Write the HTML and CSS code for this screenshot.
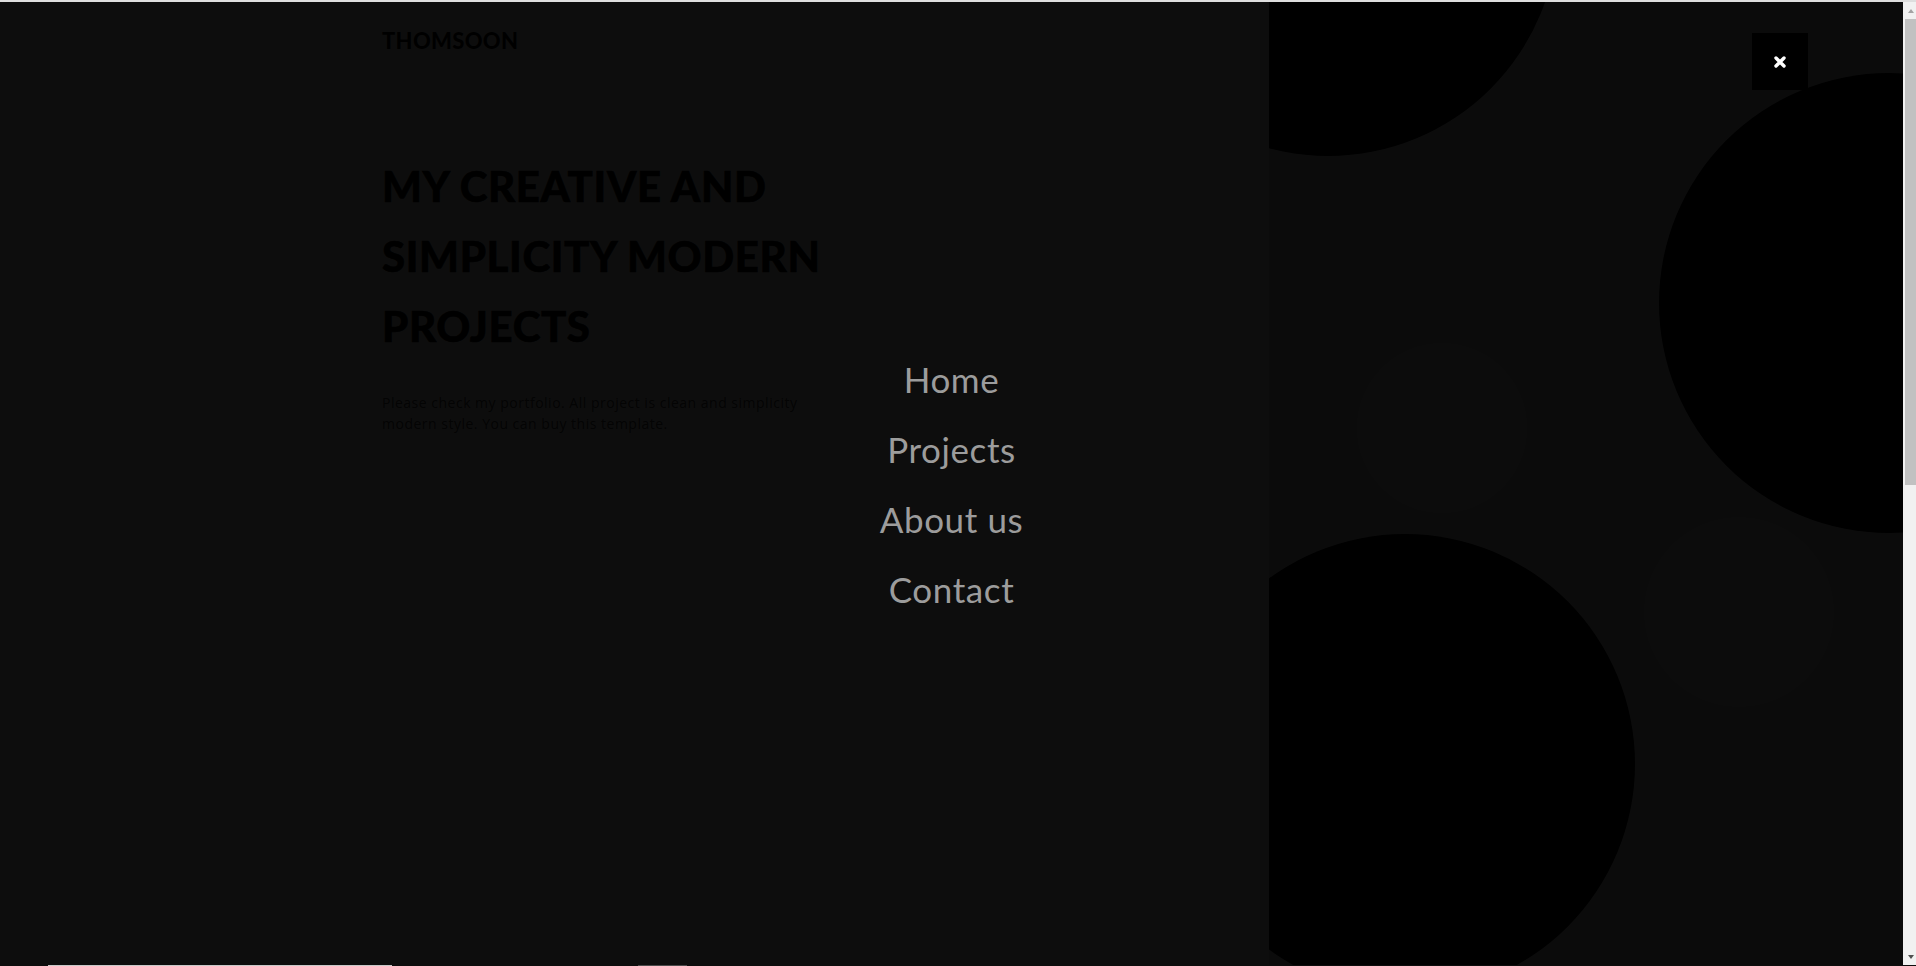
FILE: index.html
```html
<!DOCTYPE html>
<html lang="en">
<head>
<meta charset="utf-8">
<title>Thomsoon</title>
<link rel="stylesheet" href="styles.css">
</head>
<body>
<div class="topline"></div>
<div class="frame">
  <div class="page">
    <div class="main">
      <header class="site-header">
        <a class="logo" href="#">THOMSOON</a>
      </header>
      <section class="hero">
        <h1 class="hero-title">MY CREATIVE AND<br>SIMPLICITY MODERN<br>PROJECTS</h1>
        <p class="hero-text">Please check my portfolio. All project is clean and simplicity<br>modern style. You can buy this template.</p>
      </section>
    </div>
    <div class="panel">
      <svg class="panel-art" viewBox="0 0 634 963" preserveAspectRatio="none" aria-hidden="true">
        <rect x="0" y="0" width="634" height="963" fill="#d8d8d8"/>
        <circle cx="173" cy="426" r="85" fill="#e4e4e4"/>
        <circle cx="470" cy="610" r="95" fill="#dedede"/>
        <circle cx="59" cy="-76" r="230" fill="#000"/>
        <circle cx="620" cy="301" r="230" fill="#000"/>
        <circle cx="136" cy="762" r="230" fill="#000"/>
      </svg>
    </div>
    <div class="menu-overlay">
      <button class="close-btn" type="button" aria-label="Close menu">
        <svg viewBox="0 0 12 12" width="12" height="12" aria-hidden="true">
          <path d="M2 2 L10 10 M10 2 L2 10" stroke="#fff" stroke-width="3.4" stroke-linecap="round" fill="none"/>
        </svg>
      </button>
      <nav class="menu-nav">
        <ul class="menu-list">
          <li><a href="#">Home</a></li>
          <li><a href="#">Projects</a></li>
          <li><a href="#">About us</a></li>
          <li><a href="#">Contact</a></li>
        </ul>
      </nav>
    </div>
  </div>
  <div class="scrollbar">
    <div class="sb-arrow sb-up"></div>
    <div class="sb-thumb"></div>
    <div class="sb-track"></div>
    <div class="sb-arrow sb-down"></div>
  </div>
</div>
<div class="bottomline">
  <span class="seg seg-a"></span>
  <span class="seg seg-b"></span>
</div>
</body>
</html>
```
FILE: styles.css
```css
* { box-sizing: border-box; }

html, body {
  margin: 0;
  padding: 0;
  height: 966px;
  overflow: hidden;
}

body {
  display: flex;
  flex-direction: column;
  background: #0d0d0d;
  font-family: "Lato", "Liberation Sans", sans-serif;
}

.topline {
  height: 2px;
  background: #dedede;
  flex: none;
}

.frame {
  flex: 1;
  display: flex;
  min-height: 0;
}

.page {
  flex: 1;
  position: relative;
  display: flex;
  background: #ffffff;
  overflow: hidden;
}

.main {
  flex: 1;
  padding-left: 382px;
}

.site-header {
  padding-top: 28px;
  height: 149px;
}

.logo {
  display: inline-block;
  font-family: "Lato", sans-serif;
  font-weight: 900;
  font-size: 22px;
  line-height: 22px;
  letter-spacing: 0.3px;
  color: #111;
  text-decoration: none;
}

.hero-title {
  margin: 0;
  font-family: "Lato", sans-serif;
  font-weight: 900;
  font-size: 42px;
  line-height: 70px;
  letter-spacing: 0.6px;
  color: #000;
  -webkit-text-stroke: 0.6px #000;
}

.hero-text {
  margin: 31px 0 0;
  font-family: "Open Sans", sans-serif;
  font-size: 14px;
  line-height: 21px;
  letter-spacing: 0.5px;
  color: #4a4a4a;
}

.panel {
  width: 634px;
  flex: none;
}

.panel-art {
  display: block;
  width: 100%;
  height: 100%;
}

.menu-overlay {
  position: absolute;
  inset: 0;
  background: rgba(0, 0, 0, 0.95);
  display: flex;
  align-items: center;
  justify-content: center;
}

.close-btn {
  position: absolute;
  top: 31px;
  right: 95px;
  width: 56px;
  height: 57px;
  border: 0;
  padding: 0;
  background: #000;
  display: flex;
  align-items: center;
  justify-content: center;
  cursor: pointer;
}

.menu-list {
  list-style: none;
  margin: 0;
  padding: 0;
  text-align: center;
}

.menu-list li {
  font-family: "Lato", sans-serif;
  font-size: 35px;
  line-height: 70px;
  height: 70px;
}

.menu-list a {
  font-weight: 400;
  letter-spacing: 0.6px;
  color: #9c9c9c;
  text-decoration: none;
}

.scrollbar {
  width: 13px;
  flex: none;
  background: #f1f1f1;
  display: flex;
  flex-direction: column;
}

.sb-arrow {
  height: 17px;
  flex: none;
  display: flex;
  align-items: center;
  justify-content: center;
  padding-left: 2px;
}

.sb-up::before,
.sb-down::before {
  content: "";
  width: 0;
  height: 0;
  border-left: 3.5px solid transparent;
  border-right: 3.5px solid transparent;
}

.sb-up::before { border-bottom: 4px solid #a3a3a3; }
.sb-down::before { border-top: 4px solid #505050; }

.sb-thumb {
  height: 466px;
  margin-left: 2px;
  background: #c1c1c1;
  flex: none;
}

.sb-track { flex: 1; }

.bottomline {
  height: 1px;
  flex: none;
  display: flex;
  background: #0d0d0d;
}

.seg { display: block; height: 1px; }
.seg-a { margin-left: 48px; width: 344px; background: #c8c8c8; }
.seg-b { margin-left: 246px; width: 49px; background: #4a4a4a; }
```
